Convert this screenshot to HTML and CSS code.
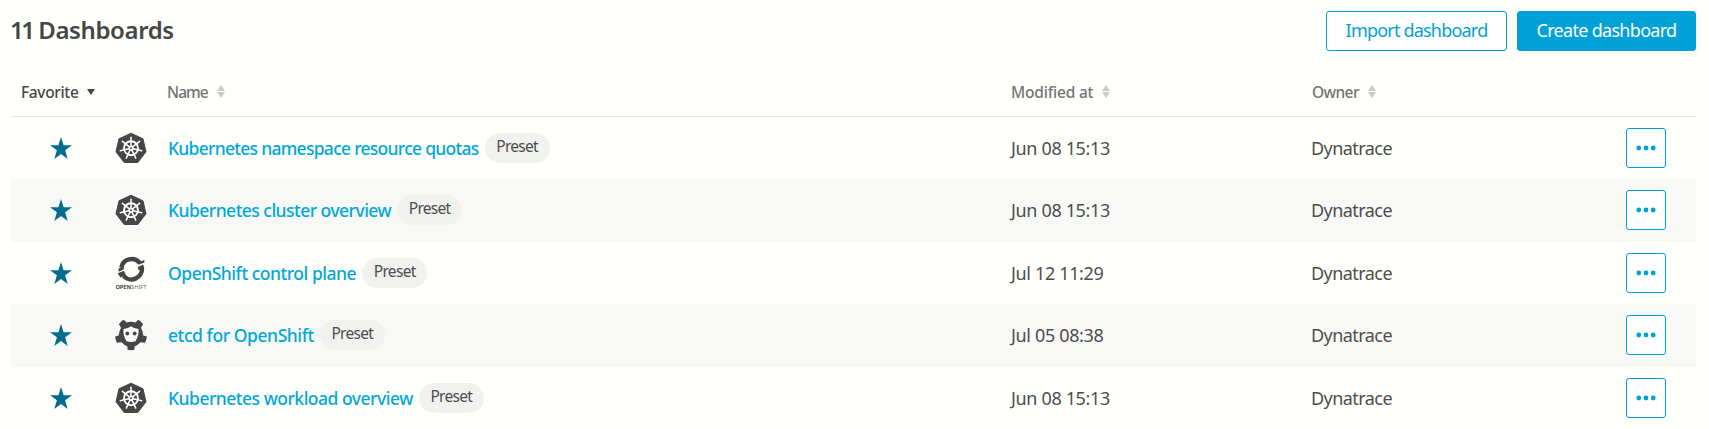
FILE: index.html
```html
<!DOCTYPE html>
<html lang="en">
<head>
<meta charset="utf-8">
<title>Dashboards</title>
<link rel="stylesheet" href="styles.css">
</head>
<body>
<svg class="sprite" aria-hidden="true">
  <symbol id="star" viewBox="0 0 22 22"><path d="M11 0l2.6 8.2H22l-6.9 5.1L17.7 22 11 16.9 4.3 22l2.6-8.7L0 8.2h8.4z"/></symbol>
  <symbol id="sort" viewBox="0 0 8 13"><path d="M4 0l4 5.900H0zM4 13L0 7.100h8z"/></symbol>
  <symbol id="dots" viewBox="0 0 20 6"><circle cx="2.8" cy="3" r="2.4"/><circle cx="10" cy="3" r="2.4"/><circle cx="17.2" cy="3" r="2.4"/></symbol>
  <symbol id="kubernetes" viewBox="0 0 32 32">
    <path d="M16 1.2L28 6.8 31 19.800L22.800 30.500H9.200L1 19.800 4 6.800z" stroke="#454646" stroke-width="1" stroke-linejoin="round"/>
    <g fill="none" stroke="#fff">
      <circle cx="16" cy="16.200" r="7" stroke-width="1.900"/>
      <g stroke-width="1.500" stroke-linecap="round">
        <path d="M16 16.200V5.200"/>
        <path d="M16 16.200V5.200" transform="rotate(51.430 16 16.200)"/>
        <path d="M16 16.200V5.200" transform="rotate(102.860 16 16.200)"/>
        <path d="M16 16.200V5.200" transform="rotate(154.290 16 16.200)"/>
        <path d="M16 16.200V5.200" transform="rotate(205.710 16 16.200)"/>
        <path d="M16 16.200V5.200" transform="rotate(257.140 16 16.200)"/>
        <path d="M16 16.200V5.200" transform="rotate(308.570 16 16.200)"/>
      </g>
    </g>
    <circle cx="16" cy="16.200" r="2.600" fill="#fff"/>
    <circle cx="16" cy="16.200" r="1"/>
  </symbol>
  <symbol id="etcd" viewBox="0 0 32 32">
    <path d="M8.600.8L11.800 3.400Q16 2.200 20.200 3.400L23.400.8Q26.300 2.500 28.100 5.300L25.900 8.800Q28.200 12.400 28.300 16.500L31.900 17.500Q31.600 20.800 30 23.700L25.400 23.300Q22.900 26.200 19.500 27.500V30.800Q16 31.600 12.500 30.800V27.500Q9.100 26.200 6.600 23.300L2 23.700Q.4 20.800.1 17.500L3.700 16.500Q3.800 12.400 6.100 8.800L3.900 5.300Q5.700 2.500 8.600.8z"/>
    <path d="M16 7.300Q18.400 9.400 23.500 9.900Q24.200 16 20.500 22.200Q16 23.600 11.500 22.200Q7.800 16 8.500 9.900Q13.600 9.400 16 7.300z" fill="#fbfbf9"/>
    <circle cx="12.300" cy="14.500" r="1.900"/><circle cx="19.700" cy="14.500" r="1.900"/>
  </symbol>
</svg>
<main class="page">
  <header class="toolbar">
    <h1 class="title"><span class="count">11</span> Dashboards</h1>
    <button class="button import">Import dashboard</button>
    <button class="button primary">Create dashboard</button>
  </header>
  <section class="table">
    <div class="row head">
      <div class="th favorite">Favorite<svg class="down" viewBox="0 0 8 6"><path d="M0 0h8L4 6z"/></svg></div>
      <div></div>
      <div class="th col-name">Name<svg class="sort"><use href="#sort"/></svg></div>
      <div class="th col-date">Modified at<svg class="sort"><use href="#sort"/></svg></div>
      <div class="th col-owner">Owner<svg class="sort"><use href="#sort"/></svg></div>
      <div></div>
    </div>
    <div class="row">
      <svg class="star"><use href="#star"/></svg>
      <svg class="icon"><use href="#kubernetes"/></svg>
      <div class="name"><a class="link namespace">Kubernetes namespace resource quotas</a><span class="tag">Preset</span></div>
      <div class="date">Jun 08 15:13</div><div class="owner">Dynatrace</div>
      <button class="more" aria-label="More"><svg class="dots"><use href="#dots"/></svg></button>
    </div>
    <div class="row striped">
      <svg class="star"><use href="#star"/></svg>
      <svg class="icon"><use href="#kubernetes"/></svg>
      <div class="name"><a class="link cluster">Kubernetes cluster overview</a><span class="tag">Preset</span></div>
      <div class="date">Jun 08 15:13</div><div class="owner">Dynatrace</div>
      <button class="more" aria-label="More"><svg class="dots"><use href="#dots"/></svg></button>
    </div>
    <div class="row">
      <svg class="star"><use href="#star"/></svg>
      <svg class="icon tall" viewBox="0 0 32 36">
        <g fill="none" stroke="#454646" stroke-width="4.400">
          <path d="M6.300 12.400A10.600 10.600 0 0 1 24.600 7.700"/>
          <path d="M27 13.200A10.600 10.600 0 0 1 8.600 21"/>
        </g>
        <path d="M3.600 13.400l4.900-2.500.2 3.600-5.200 2.200zM22.400 7.500l7-2.400v2.300l-5.800 2.300zM22.700 11.900l5.600-2.300.9 3.800-5.600 1.900zM2.700 18.200l6.300-2.400 1.900 4.400-5.600 2.200z"/>
        <text x=".4" y="34.400" class="logo-text" textLength="31" lengthAdjust="spacingAndGlyphs"><tspan class="logo-strong">OPEN</tspan>SHIFT</text>
      </svg>
      <div class="name"><a class="link control">OpenShift control plane</a><span class="tag">Preset</span></div>
      <div class="date">Jul 12 11:29</div><div class="owner">Dynatrace</div>
      <button class="more" aria-label="More"><svg class="dots"><use href="#dots"/></svg></button>
    </div>
    <div class="row striped">
      <svg class="star"><use href="#star"/></svg>
      <svg class="icon"><use href="#etcd"/></svg>
      <div class="name"><a class="link etcd">etcd for OpenShift</a><span class="tag">Preset</span></div>
      <div class="date">Jul 05 08:38</div><div class="owner">Dynatrace</div>
      <button class="more" aria-label="More"><svg class="dots"><use href="#dots"/></svg></button>
    </div>
    <div class="row">
      <svg class="star"><use href="#star"/></svg>
      <svg class="icon"><use href="#kubernetes"/></svg>
      <div class="name"><a class="link workload">Kubernetes workload overview</a><span class="tag">Preset</span></div>
      <div class="date">Jun 08 15:13</div><div class="owner">Dynatrace</div>
      <button class="more" aria-label="More"><svg class="dots"><use href="#dots"/></svg></button>
    </div>
  </section>
</main>
</body>
</html>
```

FILE: styles.css
```css
* { box-sizing: border-box; }
body {
  margin: 0;
  height: 429px;
  overflow: hidden;
  background: #fffffc;
  color: #4d4e4e;
  font: 18px/26px "Noto Sans", "Open Sans", sans-serif;
}
.sprite { position: absolute; width: 0; height: 0; }
svg { display: block; fill: #454646; }
.page { padding: 11px 13px 0 11px; }
.toolbar { display: flex; height: 40px; }
.title {
  margin: 0 auto 0 -1px;
  color: #454646;
  font-size: 24px;
  line-height: 38px;
  font-weight: 600;
  letter-spacing: -.4px;
  white-space: nowrap;
}
.count { letter-spacing: -2.5px; }
.button {
  height: 40px;
  padding: 0 0 2px;
  border: 1px solid #00a1d6;
  border-radius: 3px;
  background: #fff;
  color: #00a1d6;
  font: 18px/36px "Noto Sans", sans-serif;
  letter-spacing: -.8px;
  white-space: nowrap;
}
.import { width: 181px; margin-right: 10px; }
.primary { width: 179px; background: #00a1d6; color: #fff; letter-spacing: -.7px; }
.table { padding-top: 25px; }
.row {
  display: grid;
  grid-template-columns: 105px 52px 842px 301px 315px 40px 30px;
  align-items: center;
  height: 62px;
  white-space: nowrap;
}
.head { height: 41px; border-bottom: 1px solid #e3e6e2; align-items: start; }
.striped { height: 63px; padding-bottom: 1px; background: #f8f9f6; }
.th {
  display: flex;
  align-items: center;
  height: 31px;
  font-size: 15.5px;
  font-weight: 500;
  letter-spacing: -.2px;
  color: #737474;
}
.favorite { padding-left: 10px; color: #454646; letter-spacing: -.35px; }
.col-name { margin-left: -1px; letter-spacing: -.9px; }
.col-date { padding-left: 1px; }
.col-owner { letter-spacing: -.6px; padding-left: 1px; }
.down { width: 8px; height: 6px; margin-left: 9px; }
.sort { width: 8px; height: 13px; margin-left: 9px; fill: #c9caca; }
.star { width: 22px; height: 22px; margin-left: 38.5px; fill: #006d8f; }
.icon { width: 32px; height: 32px; margin-left: -1px; }
.icon.tall { height: 36px; }
.logo-text { font: 5px "Noto Sans", sans-serif; fill: #6a6b6b; }
.logo-strong { font-weight: 700; fill: #454646; }
.name { display: flex; align-items: center; }
.link { margin-right: 6px; color: #00a7d9; font-size: 17.5px; font-weight: 500; letter-spacing: -.5px; }
.namespace { letter-spacing: -.72px; }
.cluster { letter-spacing: -.53px; }
.control { letter-spacing: -.47px; }
.etcd { letter-spacing: -.43px; }
.tag {
  width: 65px;
  height: 30px;
  border-radius: 15px;
  background: #f1f1f0;
  font-size: 15.5px;
  line-height: 27px;
  letter-spacing: -.7px;
  text-align: center;
}
.date { padding-left: 1px; letter-spacing: -.35px; }
.owner { letter-spacing: -.55px; }
.more {
  display: grid;
  place-items: center;
  width: 40px;
  height: 40px;
  padding: 0;
  border: 1px solid #00a1d6;
  border-radius: 3px;
  background: #fff;
}
.dots { width: 20px; height: 6px; fill: #00a1d6; }
```
